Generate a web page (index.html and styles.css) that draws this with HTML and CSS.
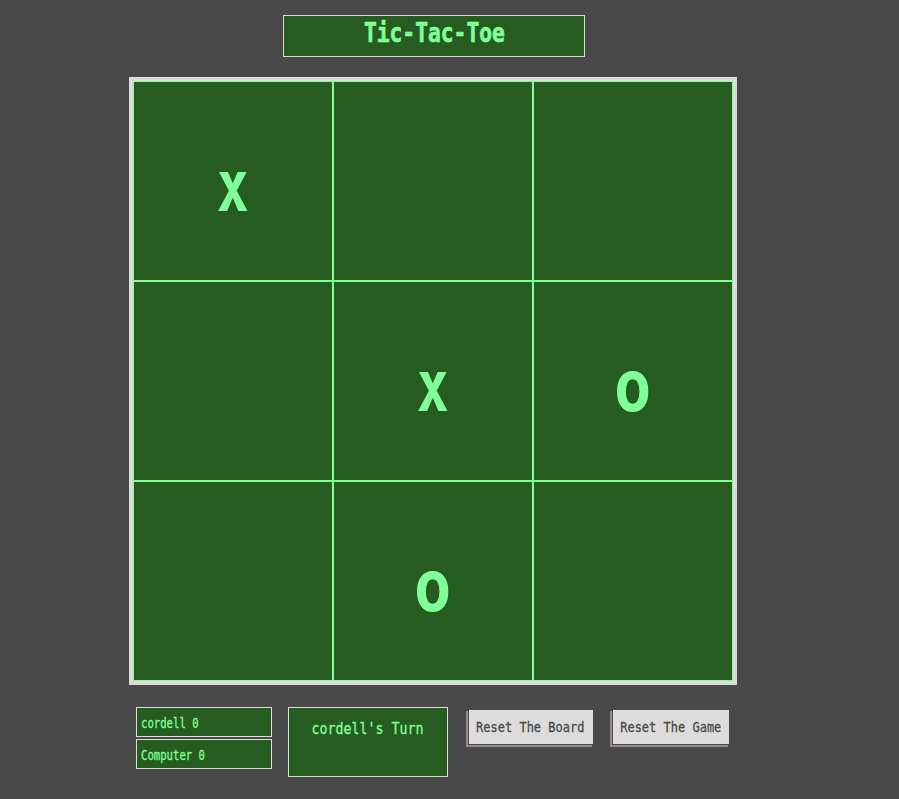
FILE: index.html
```html
<!DOCTYPE html>
<html lang="en">
<head>
<meta charset="utf-8">
<title>Tic-Tac-Toe</title>
<link rel="stylesheet" href="styles.css">
</head>
<body>
<main class="game">
  <h1 class="title"><span class="term">Tic-Tac-Toe</span></h1>
  <section class="board">
    <div class="cell"><span class="mark">x</span></div>
    <div class="cell"></div>
    <div class="cell"></div>
    <div class="cell"></div>
    <div class="cell"><span class="mark">x</span></div>
    <div class="cell"><span class="mark mark-o">o</span></div>
    <div class="cell"></div>
    <div class="cell"><span class="mark mark-o">o</span></div>
    <div class="cell"></div>
  </section>
  <footer class="panel">
    <div class="scores">
      <div class="score"><span class="term">cordell 0</span></div>
      <div class="score"><span class="term">Computer 0</span></div>
    </div>
    <div class="turn"><span class="term">cordell's Turn</span></div>
    <button class="reset reset-board"><span class="term">Reset The Board</span></button>
    <button class="reset reset-game"><span class="term">Reset The Game</span></button>
  </footer>
</main>
</body>
</html>
```
FILE: styles.css
```css
* { box-sizing: border-box; }

body {
  margin: 0;
  min-height: 799px;
  background: #494949;
  color: #80ff99;
  font-family: "DejaVu Sans Mono", monospace;
}

.game {
  width: 608px;
  margin-left: 129px;
  padding-top: 15px;
}

/* Narrow terminal lettering */
.term {
  display: inline-block;
  white-space: pre;
  transform: scaleX(0.806);
  -webkit-text-stroke: 0.3px currentColor;
}

.title {
  display: flex;
  justify-content: center;
  width: 302px;
  height: 42px;
  margin: 0 0 20px 154px;
  padding-top: 1px;
  border: 1px solid #dcdcdc;
  background: #265c20;
  font-size: 26.4px;
  font-weight: bold;
  line-height: 32px;
}

.title .term { -webkit-text-stroke-width: 0.7px; }

.board {
  display: grid;
  grid-template-columns: repeat(3, 200px);
  grid-template-rows: repeat(3, 200px);
  border: 4px solid #dcdcdc;
}

.cell {
  display: flex;
  justify-content: center;
  border: 1px solid #80ff99;
  background: #265c20;
}

.mark {
  font-size: 72px;
  font-weight: bold;
  line-height: 80px;
  padding-top: 64px;
  padding-right: 1px;
  transform: scaleX(0.74);
}

.mark-o { transform: scaleX(0.86); }

.panel {
  display: flex;
  align-items: flex-start;
  margin: 22px 0 0 7px;
}

.scores {
  display: grid;
  gap: 2px;
  width: 136px;
  margin-right: 16px;
}

.score {
  height: 30px;
  padding: 1px 0 0 4px;
  border: 1px solid #dcdcdc;
  background: #265c20;
  font-size: 13.2px;
  line-height: 30px;
}

.score .term { transform-origin: left; }

.turn {
  display: flex;
  justify-content: center;
  width: 160px;
  height: 70px;
  padding-top: 11px;
  border: 1px solid #dcdcdc;
  background: #265c20;
  font-size: 16.5px;
  line-height: 20px;
}

.reset {
  display: flex;
  justify-content: center;
  align-items: center;
  height: 34px;
  margin-top: 3px;
  padding: 0 1px 0 0;
  border: 0;
  background: #dcdcdc;
  color: #494949;
  box-shadow: 0 0 0 1px #494949, -2px 2px 0 1px #968a8a;
  font-family: inherit;
  font-size: 14.9px;
  line-height: 18px;
}

.reset-board { width: 124px; margin-left: 21px; }
.reset-game { width: 116px; margin-left: 20px; }
```
